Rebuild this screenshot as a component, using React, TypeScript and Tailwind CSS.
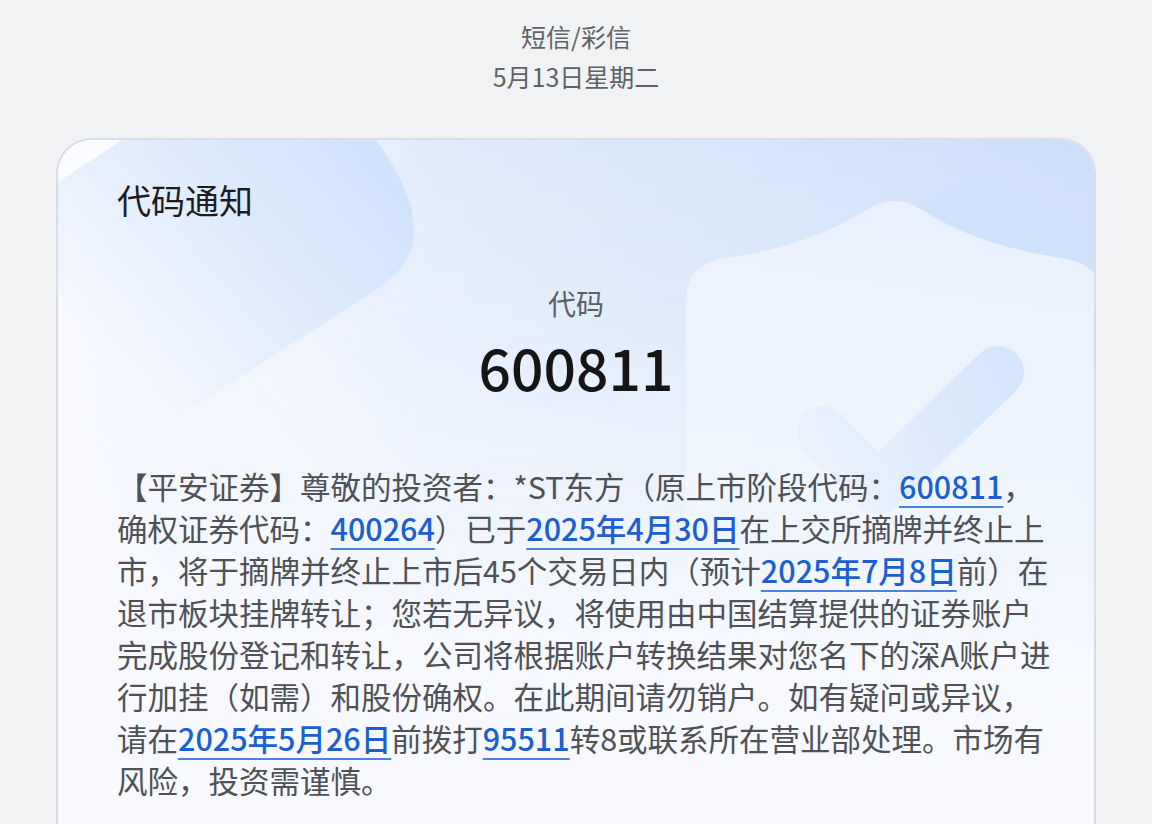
import React from 'react'

const L = ({ children }: { children: React.ReactNode }) => (
  <span className="text-[#1b5fd3] font-medium underline decoration-[#4a82dd] decoration-2 underline-offset-[7px]">
    {children}
  </span>
)

function Decor() {
  return (
    <svg
      className="absolute left-0 top-0 w-[1040px] h-[720px] pointer-events-none"
      viewBox="0 0 1040 720"
      fill="none"
    >
      <defs>
        <linearGradient id="topwash" x1="0" y1="0" x2="1" y2="0">
          <stop offset="0" stopColor="#eef4fe" stopOpacity="0" />
          <stop offset="0.35" stopColor="#e1ecfc" />
          <stop offset="1" stopColor="#cbdef9" />
        </linearGradient>
        <linearGradient id="fade" x1="0" y1="0" x2="0" y2="1">
          <stop offset="0" stopColor="#fff" stopOpacity="1" />
          <stop offset="0.25" stopColor="#fff" stopOpacity="0.75" />
          <stop offset="0.7" stopColor="#fff" stopOpacity="0" />
        </linearGradient>
        <mask id="fadeMask">
          <rect x="0" y="0" width="1040" height="720" fill="url(#fade)" />
        </mask>
        <linearGradient id="leftShape" gradientUnits="userSpaceOnUse" x1="340" y1="60" x2="60" y2="300">
          <stop offset="0" stopColor="#d1e3fc" />
          <stop offset="0.55" stopColor="#e6effd" />
          <stop offset="1" stopColor="#f6f9ff" stopOpacity="0.6" />
        </linearGradient>
        <linearGradient id="shield" gradientUnits="userSpaceOnUse" x1="836" y1="50" x2="760" y2="560">
          <stop offset="0" stopColor="#e9f1fe" />
          <stop offset="0.6" stopColor="#f0f6fe" />
          <stop offset="1" stopColor="#f6f9ff" stopOpacity="0" />
        </linearGradient>
        <linearGradient id="check" gradientUnits="userSpaceOnUse" x1="950" y1="225" x2="770" y2="330">
          <stop offset="0" stopColor="#d5e5fc" />
          <stop offset="1" stopColor="#e9f1fd" />
        </linearGradient>
      </defs>

      <rect x="0" y="0" width="1040" height="720" fill="#f7f9fe" />
      <rect x="0" y="0" width="1040" height="720" fill="url(#topwash)" mask="url(#fadeMask)" />

      <path
        d="M0,42 L64,0 L318,0 C338,28 356,58 356,92 C356,120 338,138 306,158 L112,282 Q98,292 88,278 L0,150 Z"
        fill="url(#leftShape)"
      />
      <path d="M0,0 L64,0 L0,42 Z" fill="#fbfcff" />

      <path
        d="M850,70 Q890,48 905,40 Q920,32 940,42 L1040,92 L1040,200 L850,200 Z"
        fill="#d0e2fb"
      />

      <path
        d="M628,720 L628,160 Q628,124 668,118 Q752,106 808,70 Q836,52 864,70 Q920,106 1004,118 Q1044,124 1044,160 L1044,720 Z"
        fill="url(#shield)"
      />

      <path
        d="M764,292 L820,348 L940,232"
        stroke="url(#check)"
        strokeWidth="52"
        strokeLinecap="round"
        strokeLinejoin="round"
      />
    </svg>
  )
}

export default function App() {
  return (
    <div
      className="h-[824px] overflow-hidden bg-[#f1f2f4] flex flex-col"
      style={{ fontFamily: '"Noto Sans CJK SC", "Noto Sans", sans-serif' }}
    >
      <div className="pt-[16px] flex flex-col items-center text-[25px] leading-[40px] text-[#5f6267]">
        <div>短信/彩信</div>
        <div>5月13日星期二</div>
      </div>

      <div className="relative mt-[42px] mx-[56px] rounded-[36px] border-2 border-[#d9dee6] overflow-hidden shrink-0">
        <Decor />
        <div className="relative px-[59px] pt-[38px] pb-[60px]">
          <h1 className="text-[34px] leading-[44px] text-[#1c1c1c]">代码通知</h1>

          <div className="mt-[61px] flex flex-col items-center">
            <div className="text-[28px] leading-[40px] text-[#5c5f63]">代码</div>
            <div className="mt-[8px] text-[57px] leading-[70px] text-[#151515] font-medium">600811</div>
          </div>

          <p className="mt-[64px] text-[30.5px] leading-[42px] text-[#4f5156] whitespace-nowrap">
            【平安证券】尊敬的投资者：*ST东方（原上市阶段代码：<L>600811</L>，<br />
            确权证券代码：<L>400264</L>）已于<L>2025年4月30日</L>在上交所摘牌并终止上<br />
            市，将于摘牌并终止上市后45个交易日内（预计<L>2025年7月8日</L>前）在<br />
            退市板块挂牌转让；您若无异议，将使用由中国结算提供的证券账户<br />
            完成股份登记和转让，公司将根据账户转换结果对您名下的深A账户进<br />
            行加挂（如需）和股份确权。在此期间请勿销户。如有疑问或异议，<br />
            请在<L>2025年5月26日</L>前拨打<L>95511</L>转8或联系所在营业部处理。市场有<br />
            风险，投资需谨慎。
          </p>
        </div>
      </div>
    </div>
  )
}
